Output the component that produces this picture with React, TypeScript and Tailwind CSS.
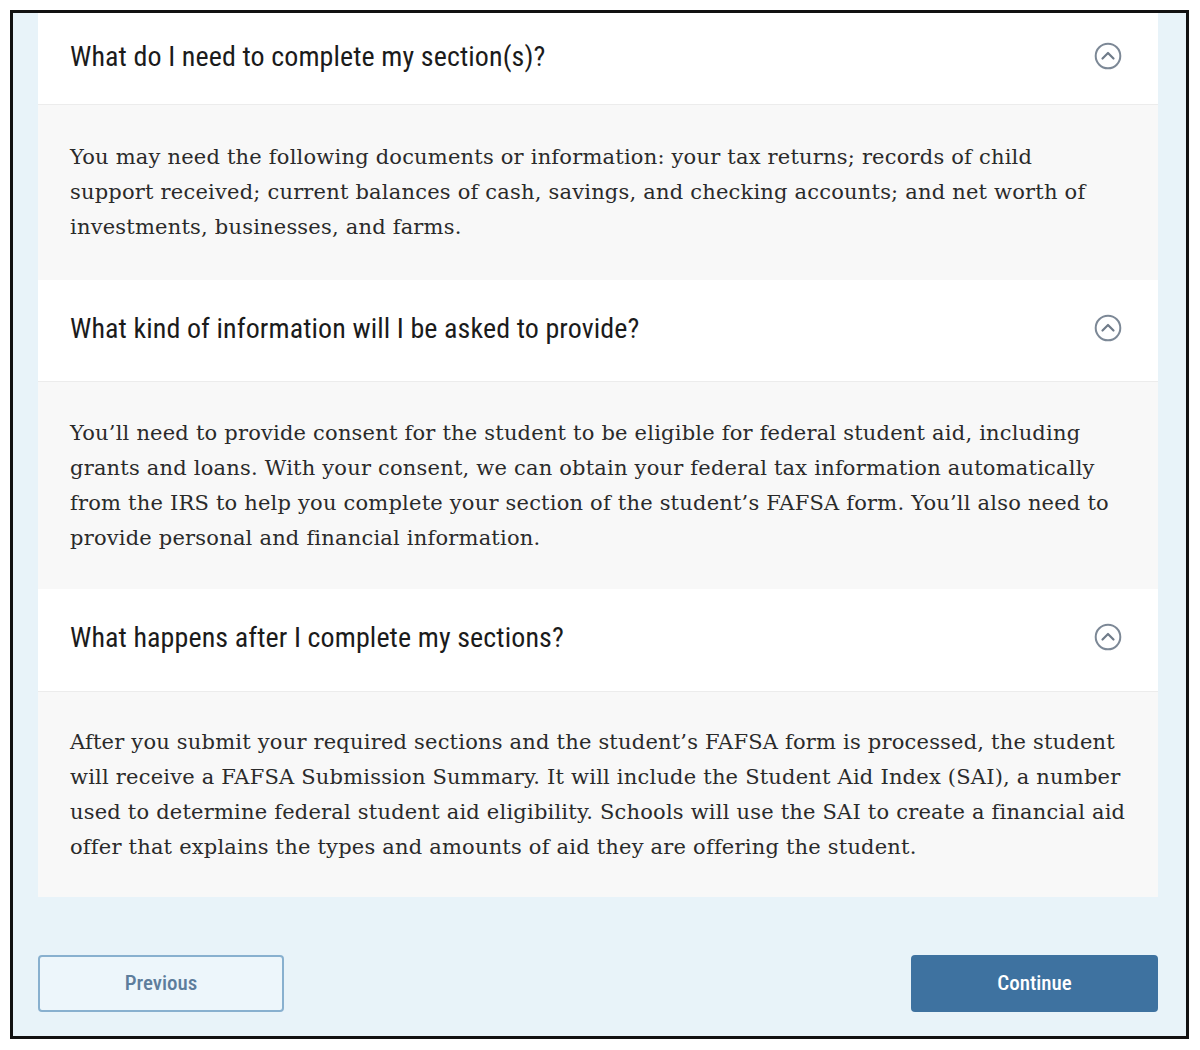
const items = [
  {
    q: "What do I need to complete my section(s)?",
    a: [
      "You may need the following documents or information: your tax returns; records of child",
      "support received; current balances of cash, savings, and checking accounts; and net worth of",
      "investments, businesses, and farms.",
    ],
    h: "h-[92px]",
    b: "h-[175px]",
  },
  {
    q: "What kind of information will I be asked to provide?",
    a: [
      "You\u2019ll need to provide consent for the student to be eligible for federal student aid, including",
      "grants and loans. With your consent, we can obtain your federal tax information automatically",
      "from the IRS to help you complete your section of the student\u2019s FAFSA form. You\u2019ll also need to",
      "provide personal and financial information.",
    ],
    h: "h-[102px]",
    b: "h-[207px]",
  },
  {
    q: "What happens after I complete my sections?",
    a: [
      "After you submit your required sections and the student\u2019s FAFSA form is processed, the student",
      "will receive a FAFSA Submission Summary. It will include the Student Aid Index (SAI), a number",
      "used to determine federal student aid eligibility. Schools will use the SAI to create a financial aid",
      "offer that explains the types and amounts of aid they are offering the student.",
    ],
    h: "h-[103px]",
    b: "h-[205px]",
  },
]

function CircleChevron() {
  return (
    <svg width="28" height="28" viewBox="0 0 28 28" fill="none" className="mb-[6px]">
      <circle cx="14" cy="14" r="12.3" stroke="#7c8896" strokeWidth="2" />
      <polyline
        points="8.5,16.5 14,11 19.5,16.5"
        stroke="#6f7b89"
        strokeWidth="2.2"
        strokeLinecap="round"
        strokeLinejoin="round"
      />
    </svg>
  )
}

export default function App() {
  return (
    <div className="h-[1050px] w-[1200px] bg-white pl-[10px] pt-[10px]">
      <div className="flex h-[1029px] w-[1179px] flex-col border-[3px] border-[#111] bg-[#e8f3f9] pl-[25px] pr-[28px]">
        <div className="flex flex-col">
          {items.map((it) => (
            <div key={it.q}>
              <div className={`flex ${it.h} items-center justify-between border-b border-[#ececec] bg-white pl-[32px] pr-[36px]`}>
                <span className="mt-[-4px] font-['Roboto',sans-serif] text-[28px] tracking-[0.1px] text-[#1b1b1b] [font-stretch:condensed]">
                  {it.q}
                </span>
                <CircleChevron />
              </div>
              <div className={`flex ${it.b} items-center bg-[#f8f8f8] pl-[32px] pr-[20px]`}>
                <p className="whitespace-nowrap font-['DejaVu_Serif',serif] text-[21px] leading-[35px] tracking-[0.2px] text-[#2a2a2a]">
                  {it.a.map((l) => (
                    <span key={l} className="block">
                      {l}
                    </span>
                  ))}
                </p>
              </div>
            </div>
          ))}
        </div>
        <div className="mt-[58px] flex justify-between">
          <button className="h-[57px] w-[246px] rounded-[4px] border-2 border-[#88b0cf] bg-[#edf6fb] font-['Roboto',sans-serif] text-[21px] font-medium tracking-[0px] text-[#5d7d9c] [font-stretch:condensed]">
            Previous
          </button>
          <button className="h-[57px] w-[247px] rounded-[4px] bg-[#3e72a0] font-['Roboto',sans-serif] text-[21px] font-medium tracking-[0px] text-white [font-stretch:condensed]">
            Continue
          </button>
        </div>
      </div>
    </div>
  )
}
